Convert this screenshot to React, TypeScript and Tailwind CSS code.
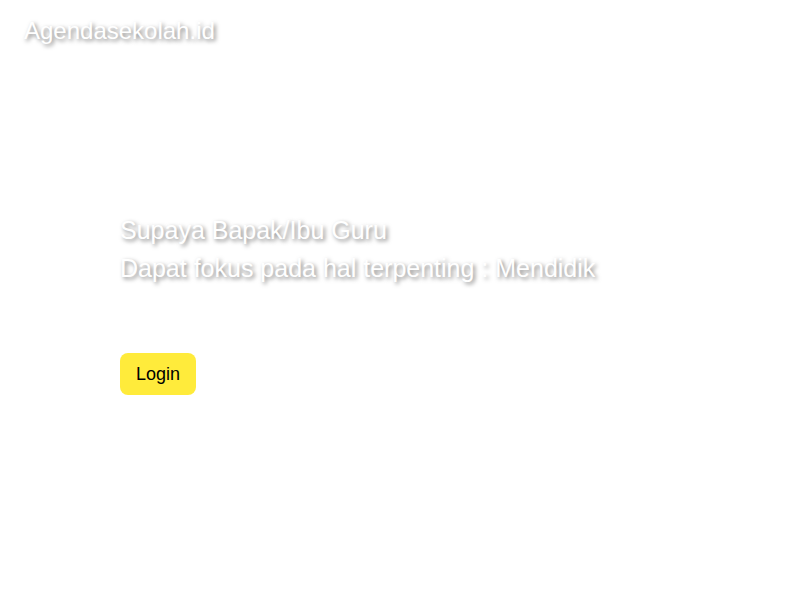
export default function App() {
  const shadow = "[text-shadow:2px_2px_4px_rgba(0,0,0,0.5)]";
  return (
    <div className="min-h-screen w-full bg-white font-['Liberation_Sans',Arial,sans-serif]">
      <header className="px-6 pt-4">
        <h1 className={`text-[24px] leading-[30px] text-white ${shadow}`}>Agendasekolah.id</h1>
      </header>
      <main className="pl-[120px] pt-[165px]">
        <p className={`text-[25px] leading-[38px] text-white ${shadow}`}>Supaya Bapak/Ibu Guru</p>
        <p className={`text-[25px] leading-[38px] text-white ${shadow}`}>Dapat fokus pada hal terpenting : Mendidik</p>
        <button className="mt-[66px] h-[42px] w-[76px] rounded-lg bg-[#ffeb3b] text-lg text-black">
          Login
        </button>
      </main>
    </div>
  );
}
